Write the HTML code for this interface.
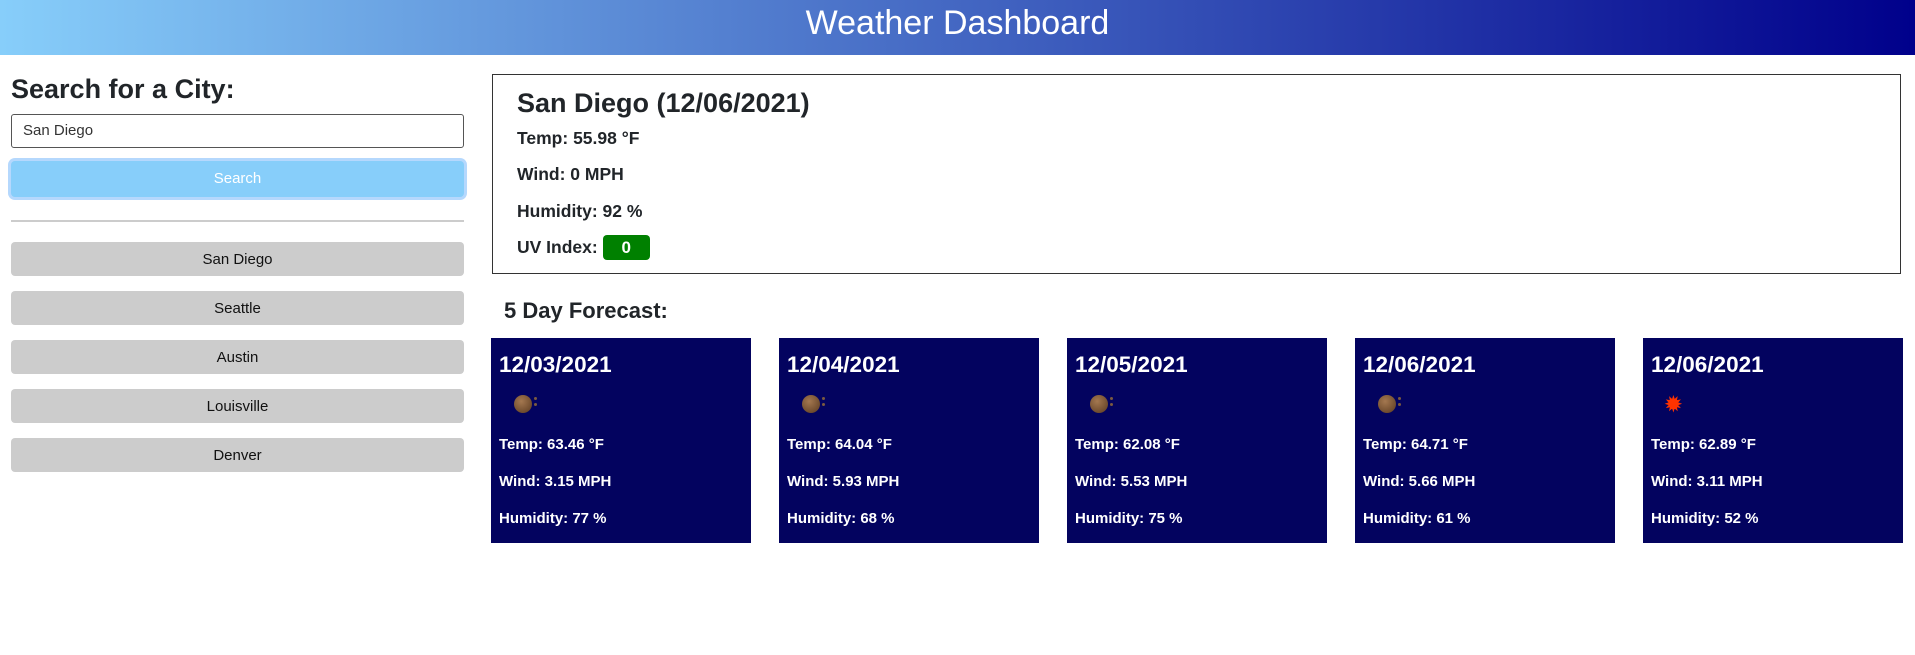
<!DOCTYPE html>
<html><head><style>
*{box-sizing:border-box;margin:0;padding:0}
body{width:1915px;height:655px;background:#fff;font-family:"Liberation Sans",Arial,sans-serif;color:#212529;position:relative;overflow:hidden}
.hdr{position:absolute;left:0;top:0;width:1915px;height:55px;background:linear-gradient(90deg,#87cefa,#00008b);color:#fff;text-align:center;font-size:34px;line-height:46px}
.abs{position:absolute}
h2{font-size:27px;font-weight:bold}
.input{left:11px;top:114px;width:453px;height:34px;border:1px solid #555;border-radius:3px;font-size:15px;padding-left:11px;line-height:32px;color:#333}
.sbtn{left:11px;top:161px;width:453px;height:36px;background:#87cefa;border-radius:4px;box-shadow:0 0 0 3px #b5d8fd;color:#fff;text-align:center;line-height:36px;font-size:15px}
.hr{left:11px;top:220px;width:453px;height:2px;background:#ccc}
.cb{left:11px;width:453px;height:34px;background:#ccc;border-radius:4px;text-align:center;line-height:36px;font-size:15px;color:#111}
.cur{left:492px;top:74px;width:1409px;height:200px;border:1px solid #333}
.cur p{position:absolute;left:24px;font-size:17.5px;font-weight:bold}
.uv{display:inline-block;background:#008000;color:#fff;width:47px;height:25px;border-radius:4px;text-align:center;line-height:25px;margin-left:5px;font-size:17px}
.card{top:338px;width:260px;height:205px;background:#03035f;color:#fff;font-weight:bold}
.card .d{position:absolute;left:8px;top:14px;font-size:22.5px}
.card .t{position:absolute;left:8px;font-size:15px}
.moon{position:absolute;left:23px;top:57px;width:18px;height:18px;border-radius:50%;background:radial-gradient(circle at 40% 35%,#a47850,#5a3a20)}
.moon:after{content:"";position:absolute;left:20px;top:2px;width:3px;height:3px;border-radius:50%;background:#7a5a40;box-shadow:0 6px 0 #7a5a40}
.sun{position:absolute;left:22px;top:54px;font-size:20px;color:#ff3300}
</style></head><body>
<div class="hdr">Weather Dashboard</div>
<h2 class="abs" style="left:11px;top:74px">Search for a City:</h2>
<div class="abs input">San Diego</div>
<div class="abs sbtn">Search</div>
<div class="abs hr"></div>
<div class="abs cb" style="top:242px">San Diego</div>
<div class="abs cb" style="top:291px">Seattle</div>
<div class="abs cb" style="top:340px">Austin</div>
<div class="abs cb" style="top:389px">Louisville</div>
<div class="abs cb" style="top:438px">Denver</div>
<div class="abs cur">
<h2 style="position:absolute;left:24px;top:13px">San Diego (12/06/2021)</h2>
<p style="top:53px">Temp: 55.98 °F</p>
<p style="top:89px">Wind: 0 MPH</p>
<p style="top:126px">Humidity: 92 %</p>
<p style="top:160px">UV Index:<span class="uv">0</span></p>
</div>
<div class="abs" style="left:504px;top:298px;font-size:22px;font-weight:bold">5 Day Forecast:</div>
<div class="abs card" style="left:491px"><div class="d">12/03/2021</div><div class="moon"></div><div class="t" style="top:98px">Temp: 63.46 °F</div><div class="t" style="top:135px">Wind: 3.15 MPH</div><div class="t" style="top:172px">Humidity: 77 %</div></div>
<div class="abs card" style="left:779px"><div class="d">12/04/2021</div><div class="moon"></div><div class="t" style="top:98px">Temp: 64.04 °F</div><div class="t" style="top:135px">Wind: 5.93 MPH</div><div class="t" style="top:172px">Humidity: 68 %</div></div>
<div class="abs card" style="left:1067px"><div class="d">12/05/2021</div><div class="moon"></div><div class="t" style="top:98px">Temp: 62.08 °F</div><div class="t" style="top:135px">Wind: 5.53 MPH</div><div class="t" style="top:172px">Humidity: 75 %</div></div>
<div class="abs card" style="left:1355px"><div class="d">12/06/2021</div><div class="moon"></div><div class="t" style="top:98px">Temp: 64.71 °F</div><div class="t" style="top:135px">Wind: 5.66 MPH</div><div class="t" style="top:172px">Humidity: 61 %</div></div>
<div class="abs card" style="left:1643px"><div class="d">12/06/2021</div><div class="sun">✹</div><div class="t" style="top:98px">Temp: 62.89 °F</div><div class="t" style="top:135px">Wind: 3.11 MPH</div><div class="t" style="top:172px">Humidity: 52 %</div></div>
</body></html>
